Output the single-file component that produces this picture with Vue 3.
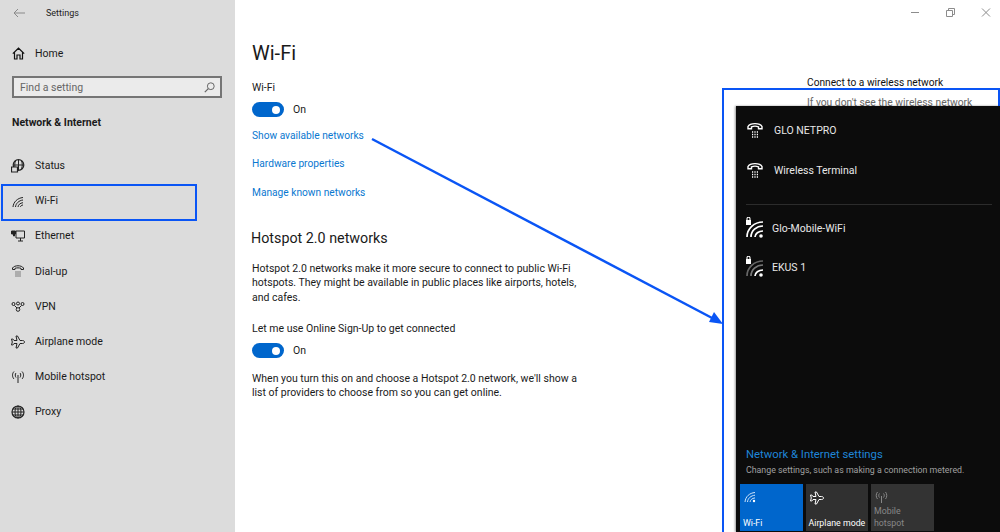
<template>
  <div class="page">
    <aside class="side">
      <div class="titlebar">
        <svg class="back" width="12" height="10" viewBox="0 0 12 10"><path d="M12 5H1M5 1 1 5l4 4" fill="none" stroke="#8a8a8a" stroke-width="1"/></svg>
        <span>Settings</span>
      </div>
      <div class="home">
        <svg class="ic" width="13" height="13" viewBox="0 0 13 13"><path d="M.8 6.600 6.500 1.200l5.700 5.400M2.500 5.400V12H5V8h3v4h2.500V5.400" fill="none" stroke="#111" stroke-width="1.200"/></svg>
        <span>Home</span>
      </div>
      <div class="search">
        <span>Find a setting</span>
        <svg width="11" height="11" viewBox="0 0 11 11"><circle cx="6.800" cy="4.200" r="3.400" fill="none" stroke="#666"/><path d="M4.300 6.700.8 10.200" stroke="#666" stroke-width="1.200"/></svg>
      </div>
      <div class="section">Network &amp; Internet</div>
      <nav class="nav">
        <div v-for="item in navItems" :key="item.label" class="nav-row">
          <svg class="ic" width="14" height="14" viewBox="0 0 14 14" fill="none" stroke="#222" stroke-width="1" v-html="item.icon"></svg>
          <span>{{ item.label }}</span>
        </div>
      </nav>
      <div class="hl"></div>
    </aside>

    <main class="main">
      <h1>Wi-Fi</h1>
      <div class="label">Wi-Fi</div>
      <div class="toggle-row"><i class="toggle"></i><span>On</span></div>
      <a class="link first">Show available networks</a>
      <a class="link">Hardware properties</a>
      <a class="link">Manage known networks</a>
      <h2>Hotspot 2.0 networks</h2>
      <p class="para">Hotspot 2.0 networks make it more secure to connect to public Wi-Fi hotspots. They might be available in public places like airports, hotels, and cafes.</p>
      <div class="label signup">Let me use Online Sign-Up to get connected</div>
      <div class="toggle-row"><i class="toggle"></i><span>On</span></div>
      <p class="para last">When you turn this on and choose a Hotspot 2.0 network, we'll show a list of providers to choose from so you can get online.</p>
    </main>

    <div class="win-btns">
      <svg width="80" height="12" viewBox="0 0 80 12" fill="none" stroke="#8c8c8c"><path d="M0 6.500h8"/><path d="M35.500 4.500h6v6h-6zM37.500 4.500v-2h6v6h-2"/><path d="M71 2.500l8 8M79 2.500l-8 8"/></svg>
    </div>

    <div class="behind">
      <div>Connect to a wireless network</div>
    </div>

    <div class="callout">
      <div class="behind-line">If you don't see the wireless network</div>
      <div class="flyout">
        <div class="net dial" v-for="n in dialNets" :key="n">
          <svg width="16" height="17" viewBox="0 0 16 17" fill="none" stroke="#fff"><path d="M1 6.800V4.500C3 .6 13 .6 15 4.500v2.300h-3.500V4.800c-2-.8-5-.8-7 0v2z" stroke-width="1.400"/><path d="M5 10h1.200M7.400 10h1.200M9.800 10h1.200M5 12.500h1.200M7.400 12.500h1.200M9.800 12.500h1.200M5 15h1.200M7.400 15h1.200M9.800 15h1.200" stroke-width="1.300"/></svg>
          <span>{{ n }}</span>
        </div>
        <div class="rule"></div>
        <div class="net wifi" v-for="n in wifiNets" :key="n.name">
          <svg width="19" height="24" viewBox="0 0 19 24" fill="none" stroke-width="1.700">
            <rect x="1" y="3" width="5" height="5" fill="#fff"/><path d="M2 3V1.800a1.500 1.500 0 0 1 3 0V3" stroke="#fff" stroke-width="1.100"/>
            <path d="M2 20A16 15 0 0 1 18 5" :stroke="n.dim ? '#666' : '#fff'"/>
            <path d="M6 20A12 11 0 0 1 18 9" :stroke="n.dim ? '#777' : '#fff'"/>
            <path d="M10 20A8 6 0 0 1 18 14" stroke="#fff"/>
            <circle cx="16" cy="19" r="1.800" fill="#fff" stroke="none"/>
          </svg>
          <span>{{ n.name }}</span>
        </div>
        <div class="grow"></div>
        <div class="fly-link">Network &amp; Internet settings</div>
        <div class="fly-sub">Change settings, such as making a connection metered.</div>
        <div class="tiles">
          <div class="tile on">
            <svg width="12" height="12" viewBox="0 0 12 12" fill="none" stroke="#cfe4fa"><path d="M1 11C1.500 5.500 5.500 2 11 1.500M3.500 11c.4-3.800 3.300-6.300 7.500-6.800M6 11c.3-2 2-3.800 5-4.100"/><circle cx="10" cy="10" r="1.200" fill="#fff" stroke="none"/></svg>
            <span>Wi-Fi</span>
          </div>
          <div class="tile">
            <svg width="14" height="14" viewBox="0 0 14 14" fill="none" stroke="#fff"><path d="M13.500 7c0-1-1-1.500-2-1.500H9L6.500 1H5l1 4.500H3L1.800 4H.5l.8 3-.8 3h1.300L3 8.500h3L5 13h1.500L9 8.500h2.500c1 0 2-.5 2-1.500z"/></svg>
            <span>Airplane mode</span>
          </div>
          <div class="tile off">
            <svg width="13" height="12" viewBox="0 0 13 12" fill="none" stroke="#888"><path d="M6.500 5v7M4.500 2.500c-1 1-1 3 0 4M8.500 2.500c1 1 1 3 0 4M2.500 1C.8 3 .8 6 2.500 8M10.500 1c1.700 2 1.700 5 0 7"/></svg>
            <span>Mobile hotspot</span>
          </div>
        </div>
      </div>
    </div>

    <svg class="arrow" width="1000" height="532" viewBox="0 0 1000 532">
      <path d="M372 139 714 319" stroke="#0a55f5" stroke-width="2.500"/>
      <path d="M723 324 709 322 714 312z" fill="#0a55f5"/>
    </svg>
  </div>
</template>

<script setup>
const navItems = [
  { label: 'Status', icon: '<circle cx="7.500" cy="6" r="5.300" stroke-width="1.200"/><path d="M2.500 6h10M7.500 1v10M4.500 1.800c-1 2.500-1 5.500 0 8M10.500 1.800c1 2.500 1 5.500 0 8"/><path d="M.5 8h6v5h-6z" fill="#dcdcdc" stroke-width="1.200"/>' },
  { label: 'Wi-Fi', icon: '<path d="M2 13c.4-5 4.500-9 10-9.500M4.500 13c.3-3.500 3.300-6.500 7.500-7M7 13c.2-2 2-4 5-4.300M9.500 13c0-1 1-2 2.500-2"/>' },
  { label: 'Ethernet', icon: '<path d="M5 2h8.500v7H5zM7 12h5M9.500 9v3"/><path d="M.5 2h4v3h-1v2h-1V5h-2z" fill="#222"/>' },
  { label: 'Dial-up', icon: '<path d="M1.500 5.500V4C3.500 1 10.500 1 12.500 4v1.500H10V4.300c-2-.6-4-.6-6 0v1.200z"/><path d="M4.500 8h1M6.500 8h1M8.500 8h1M4.500 10h1M6.500 10h1M8.500 10h1M4.500 12h1M6.500 12h1M8.500 12h1"/>' },
  { label: 'VPN', icon: '<circle cx="2.500" cy="5" r="1.500"/><circle cx="7" cy="4.500" r="1.500"/><circle cx="11.500" cy="5" r="1.500"/><circle cx="7" cy="10.500" r="1.800"/><path d="M3.500 6.500 6 9M10.500 6.500 8 9"/>' },
  { label: 'Airplane mode', icon: '<path d="M13.500 7c0-1-1-1.500-2-1.500H9L6.500 1H5l1 4.500H3L1.800 4H.5l.8 3-.8 3h1.300L3 8.500h3L5 13h1.500L9 8.500h2.500c1 0 2-.5 2-1.500z"/>' },
  { label: 'Mobile hotspot', icon: '<path d="M7 5v8M5 3c-1 1-1 3 0 4.500M9 3c1 1 1 3 0 4.500M3 1.500C1 3.500 1 7 3 9M11 1.500c2 2 2 5.500 0 7.500"/>' },
  { label: 'Proxy', icon: '<circle cx="7" cy="7" r="6" stroke-width="1.200"/><path d="M1 7h12M7 1v12M1.800 4h10.400M1.800 10h10.400"/><ellipse cx="7" cy="7" rx="3" ry="6"/>' }
]

const dialNets = ['GLO NETPRO', 'Wireless Terminal']
const wifiNets = [
  { name: 'Glo-Mobile-WiFi', dim: false },
  { name: 'EKUS 1', dim: true }
]
</script>

<style>
html, body { margin: 0; background: #fff; }
</style>

<style scoped>
.page { position: relative; display: flex; width: 1000px; height: 532px; overflow: hidden; background: #fff; font-family: Roboto, "Noto Sans", sans-serif; font-size: 10.5px; color: #1a1a1a; }
.side { position: relative; flex: 0 0 235px; background: #dcdcdc; box-sizing: border-box; padding: 0 12px; }
.titlebar { display: flex; align-items: center; height: 25px; font-size: 9px; gap: 21px; padding-left: 1px; color: #222; }
.home { display: flex; align-items: center; gap: 10px; margin-top: 20px; height: 16px; }
.search { display: flex; align-items: center; justify-content: space-between; box-sizing: border-box; width: 210px; height: 22px; margin-top: 15px; padding: 0 5px 0 6px; background: #ebebeb; border: 2px solid #757575; color: #666; }
.section { margin-top: 17px; font-weight: 700; line-height: 16px; }
.nav { margin-top: 17px; }
.nav-row { display: flex; align-items: center; gap: 10px; height: 35.200px; margin-left: -1px; }
.hl { position: absolute; left: 1px; top: 184px; width: 196px; height: 37px; box-sizing: border-box; border: 2px solid #0a55f5; }
.main { flex: 1; padding: 41px 0 0 17px; }
h1 { margin: 0; font-size: 20px; font-weight: 400; line-height: 24px; }
.label { margin-top: 16px; line-height: 14px; }
.toggle-row { display: flex; align-items: center; gap: 9px; height: 15px; margin-top: 7px; }
.toggle { position: relative; display: block; width: 32px; height: 15px; border-radius: 8px; background: #0066cc; }
.toggle::after { content: ""; position: absolute; right: 4px; top: 3.500px; width: 8px; height: 8px; border-radius: 50%; background: #fff; }
.link { display: block; height: 28.300px; line-height: 14px; font-size: 10.200px; color: #0a78d0; }
.link.first { margin-top: 12px; }
h2 { margin: 14.500px 0 0 -1px; font-size: 14.300px; font-weight: 400; line-height: 20px; }
.para { width: 325px; margin: 13.500px 0 0; line-height: 14.500px; }
.label.signup { margin-top: 17px; }
.para.last { margin-top: 14px; line-height: 13.500px; }
.win-btns { position: absolute; top: 6px; right: 9px; }
.behind { position: absolute; left: 807px; top: 76px; font-size: 10.200px; line-height: 14px; color: #111; }
.callout { position: absolute; left: 722px; top: 88px; width: 278px; height: 444px; box-sizing: border-box; border: 2px solid #0a55f5; border-bottom: 0; display: flex; flex-direction: column; background: #fff; }
.behind-line { box-sizing: border-box; height: 16px; padding: 6px 0 0 83px; font-size: 10.300px; line-height: 14px; color: #666; white-space: nowrap; }
.flyout { position: relative; flex: 1; display: flex; flex-direction: column; margin: 0 -2px 0 12px; padding: 0 8px 1px 4px; background: #0c0c0c; color: #e8e8e8; box-shadow: -1px 0 2px rgba(0,0,0,.4); }
.net { display: flex; align-items: center; }
.dial { height: 40px; gap: 11px; padding-left: 7px; }
.dial:first-child { margin-top: 4px; }
.wifi { height: 39px; gap: 8px; padding-left: 5px; }
.rule { height: 1px; margin: 14px 0 4px 6px; background: #2c2c2c; }
.grow { flex: 1; }
.fly-link { margin-left: 6px; font-size: 11.300px; line-height: 15px; color: #1f86d8; }
.fly-sub { margin: 1px 0 7px 6px; font-size: 8.800px; line-height: 14px; color: #a0a0a0; white-space: nowrap; }
.tiles { display: flex; gap: 3px; }
.tile { display: flex; flex-direction: column; justify-content: space-between; box-sizing: border-box; width: 62.500px; height: 47px; padding: 7px 0 2px 3px; background: #303030; color: #fff; font-size: 8.800px; line-height: 12px; }
.tile span { white-space: nowrap; }
.tile.on { background: #0066cc; }
.tile.off { background: #333; color: #888; }
.tile.off span { max-width: 40px; white-space: normal; }
.tile svg { margin-left: 1px; }
.arrow { position: absolute; left: 0; top: 0; pointer-events: none; }
</style>
